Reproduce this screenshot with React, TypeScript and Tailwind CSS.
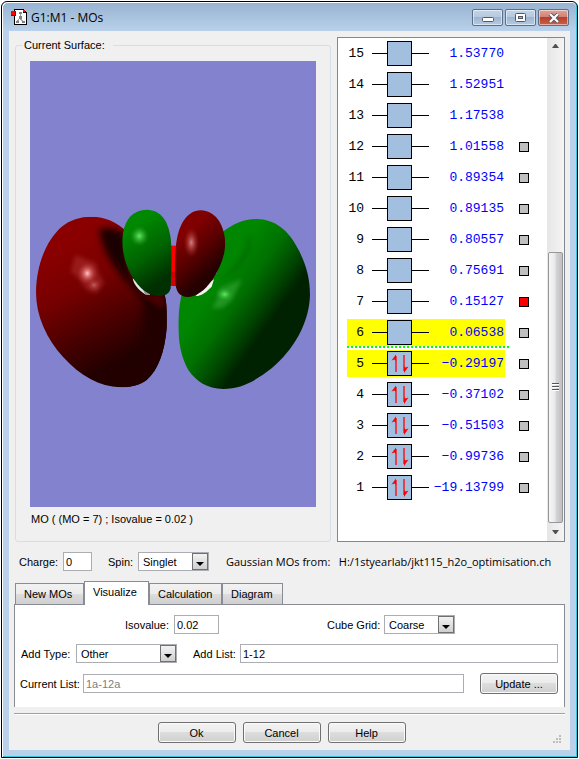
import React, { useState } from "react";

interface Orbital {
  id: number;
  energy: string;
  occupied: boolean;
  frontier: boolean;
  available: boolean;
}

const energies = [
  "1.53770",
  "1.52951",
  "1.17538",
  "1.01558",
  "0.89354",
  "0.89135",
  "0.80557",
  "0.75691",
  "0.15127",
  "0.06538",
  "-0.29197",
  "-0.37102",
  "-0.51503",
  "-0.99736",
  "-19.13799",
];

const orbitals: Orbital[] = energies.map((energy, i) => {
  const id = energies.length - i;
  return {
    id,
    energy: energy.replace("-", "−"),
    occupied: id <= 5,
    frontier: id === 5 || id === 6,
    available: id <= 12,
  };
});

const TitleIcon: React.FC = () => (
  <svg width="16" height="17" viewBox="0 0 16 17" shapeRendering="crispEdges">
    <path d="M3 0h10v1h1v1h1v1h1v13H3z" fill="#000" />
    <path d="M4 1h8v3h3v11H4z" fill="#fff" />
    <rect x="12" y="1" width="2" height="2" fill="#f00" />
    <path d="M9 4v5M9 9l-3 4M9 9l3 4" stroke="#a0a0a0" strokeWidth="1" />
    <path d="M8 3h3v2H8zM8 7h3v3H8zM5 12h3v2H5zM11 12h3v2h-3z" fill="#808080" />
    <rect x="0" y="2" width="5" height="5" fill="#900" />
    <rect x="0" y="2" width="4" height="4" fill="#f00" />
  </svg>
);

const Surface: React.FC = () => (
  <svg viewBox="0 0 286 446" className="w-full h-auto block bg-[#8282ce]" role="img" aria-label="MO 7">
    <defs>
      <linearGradient id="redLobe" gradientUnits="userSpaceOnUse" x1="120" y1="130" x2="300" y2="470">
        <stop offset="0" stopColor="#8a0000" />
        <stop offset="0.35" stopColor="#760000" />
        <stop offset="0.7" stopColor="#480000" />
        <stop offset="1" stopColor="#220000" />
      </linearGradient>
      <linearGradient id="greenLobe" gradientUnits="userSpaceOnUse" x1="570" y1="240" x2="730" y2="354">
        <stop offset="0" stopColor="#008600" />
        <stop offset="0.4" stopColor="#007000" />
        <stop offset="0.75" stopColor="#004600" />
        <stop offset="1" stopColor="#002200" />
      </linearGradient>
      <linearGradient id="greenSmall" gradientUnits="userSpaceOnUse" x1="310" y1="80" x2="410" y2="230">
        <stop offset="0" stopColor="#008800" />
        <stop offset="0.5" stopColor="#006600" />
        <stop offset="1" stopColor="#003000" />
      </linearGradient>
      <linearGradient id="redSmall" gradientUnits="userSpaceOnUse" x1="470" y1="100" x2="560" y2="200">
        <stop offset="0" stopColor="#800000" />
        <stop offset="0.5" stopColor="#580000" />
        <stop offset="1" stopColor="#250000" />
      </linearGradient>
      <radialGradient id="pinkGlow">
        <stop offset="0" stopColor="#ffc8c8" />
        <stop offset="0.35" stopColor="#e07070" stopOpacity="0.8" />
        <stop offset="1" stopColor="#a02020" stopOpacity="0" />
      </radialGradient>
      <radialGradient id="limeGlow">
        <stop offset="0" stopColor="#60e860" />
        <stop offset="0.4" stopColor="#38b838" stopOpacity="0.8" />
        <stop offset="1" stopColor="#108810" stopOpacity="0" />
      </radialGradient>
      <clipPath id="redClip">
        <path d="M185 50C225 50 260 66 290 95L340 220L404 285C411 310 411 350 410 385C404 455 385 510 350 540C330 555 305 562 270 562C210 560 150 528 100 472C50 415 18 350 18 275C20 190 50 120 95 80C120 60 150 50 185 50Z" />
      </clipPath>
      <clipPath id="greenClip">
        <path d="M580 94C610 72 640 57 680 57C735 58 775 90 803 145C828 190 840 235 840 285C838 370 790 450 725 505C680 540 635 567 580 567C530 565 500 545 475 510C452 470 445 425 445 370C446 330 450 310 454 288L500 260L560 220Z" />
      </clipPath>
      <filter id="blur6">
        <feGaussianBlur stdDeviation="6" />
      </filter>
      <filter id="blur10" x="-50%" y="-50%" width="200%" height="200%">
        <feGaussianBlur stdDeviation="10" />
      </filter>
      <filter id="blur14" x="-50%" y="-50%" width="200%" height="200%">
        <feGaussianBlur stdDeviation="14" />
      </filter>
    </defs>
    <g transform="translate(0 139) scale(0.33333)">
      <rect x="420" y="137" width="22" height="121" fill="#f00" />
      <path d="M420 215h22v43h-22z" fill="#a80000" opacity="0.5" />
      <g clipPath="url(#redClip)">
        <rect y="40" width="430" height="540" fill="url(#redLobe)" />
        <path d="M330 250C350 330 350 450 270 580H440V270Z" fill="#200000" filter="url(#blur14)" />
        <path d="M208 85C212 130 235 180 272 225C300 262 350 300 400 330L380 280L300 230L290 100L245 85Z" fill="#1e0000" filter="url(#blur10)" />
        <path d="M320 262C345 300 375 320 405 325L402 285L360 280Z" fill="#480000" filter="url(#blur6)" />
        <path d="M135 165L160 175L198 190L205 215L222 250L200 280L170 270L145 235L122 215Z" fill="#c04040" opacity="0.4" filter="url(#blur6)" />
        <ellipse cx="172" cy="220" rx="32" ry="36" fill="url(#pinkGlow)" />
        <ellipse cx="192" cy="255" rx="24" ry="22" fill="url(#pinkGlow)" opacity="0.4" />
      </g>
      <g clipPath="url(#greenClip)">
        <rect x="440" y="50" width="410" height="530" fill="url(#greenLobe)" />
        <path d="M650 110C650 150 620 200 560 245L600 225C650 190 668 150 664 105Z" fill="#006000" opacity="0.4" filter="url(#blur6)" />
        <path d="M636 236L606 300L575 325L545 325L560 300L570 265Z" fill="#38a838" opacity="0.6" filter="url(#blur6)" />
        <ellipse cx="584" cy="283" rx="30" ry="24" fill="url(#limeGlow)" />
      </g>
      <path d="M308 235L330 250L360 279V285L345 283C325 270 312 255 308 235Z" fill="#e8e8e8" />
      <path d="M335 262L360 279V285L345 283Z" fill="#999" />
      <path d="M552 238L545 260C530 275 515 288 497 288L515 265Z" fill="#f4f4f4" />
      <path
        d="M350 29C395 30 415 65 422 115C426 150 425 200 422 265C418 282 405 289 385 288C345 285 318 255 296 210C280 175 274 135 279 100C286 55 310 30 350 29Z"
        fill="url(#greenSmall)"
      />
      <ellipse cx="328" cy="108" rx="30" ry="32" fill="url(#limeGlow)" />
      <path
        d="M512 31C555 32 580 70 585 120C588 165 570 205 545 242C525 270 500 290 472 291C450 290 440 278 437 255C434 220 434 180 438 135C445 75 470 32 512 31Z"
        fill="url(#redSmall)"
      />
      <ellipse cx="484" cy="128" rx="24" ry="46" fill="url(#pinkGlow)" opacity="0.65" />
    </g>
  </svg>
);

const OrbitalRow: React.FC<{
  orbital: Orbital;
  selected: boolean;
  onSelect: () => void;
}> = ({ orbital, selected, onSelect }) => (
  <li className="h-[31px] pt-[2px]">
    <div className="flex items-center h-[27px]">
      <div
        className={`flex items-center h-full w-[158px] pr-px ${
          orbital.frontier ? "bg-[#ffff00]" : ""
        }`}
      >
        <span className="w-[17px] shrink-0 flex justify-end">{orbital.id}</span>
        <span className="w-[15px] ml-2 h-px bg-black shrink-0" />
        <span className="w-[25px] h-[25px] shrink-0 border border-black bg-[#a2bfdf]">
          {orbital.occupied && (
            <svg width="23" height="23" viewBox="0 0 23 23" fill="none" stroke="#f00">
              <path d="M8 20V4" strokeWidth="1.3" />
              <path d="M8 2.5V9L6.5 7.5L3.5 8.5Z" fill="#f00" stroke="none" />
              <path d="M16 3V19" strokeWidth="1.3" />
              <path d="M16 21V14L17.5 15.5L20.5 14.5Z" fill="#f00" stroke="none" />
            </svg>
          )}
        </span>
        <span className="w-[17px] h-px bg-black shrink-0" />
        <span className="grow flex justify-end text-[#0000ff]">{orbital.energy}</span>
      </div>
      {orbital.available && (
        <input
          type="checkbox"
          aria-label={`MO ${orbital.id}`}
          checked={selected}
          onChange={onSelect}
          className="appearance-none w-[10px] h-[10px] ml-[14px] border border-black bg-[#c0c0c0] checked:bg-[#ff0000]"
        />
      )}
    </div>
    {orbital.id === 6 && (
      <div className="w-[162px] h-[2px] bg-[repeating-linear-gradient(90deg,#00ff00_0_2px,#ffffff_2px_4px)]" />
    )}
  </li>
);

const Select: React.FC<{
  id: string;
  options: string[];
  className: string;
}> = ({ id, options, className }) => (
  <div className={`relative h-[19px] ${className}`}>
    <select
      id={id}
      className="appearance-none block w-full h-full border border-[#abadb3] bg-white pl-1 pr-4 outline-none leading-4"
    >
      {options.map((o) => (
        <option key={o}>{o}</option>
      ))}
    </select>
    <span className="absolute right-px top-px bottom-px w-4 border border-[#707070] bg-gradient-to-b from-[#f2f2f2] to-[#cfcfcf] flex items-center justify-center pointer-events-none">
      <svg width="8" height="4" viewBox="0 0 8 4" className="mt-1">
        <path d="M0 0h8L4 4z" fill="#000" />
      </svg>
    </span>
  </div>
);

const inputClass = "h-[19px] border border-[#abadb3] bg-white px-[2px] outline-none";
const buttonClass =
  "w-[78px] h-[21px] rounded-[3px] border border-[#707070] bg-[linear-gradient(#f3f3f3,#ebebeb_50%,#dddddd_50%,#cfcfcf)] shadow-[inset_0_0_0_1px_#fafafa] leading-4";
const captionClass =
  "w-[31px] h-[17px] rounded-[2px] border border-[#5c6f88] flex items-center justify-center shadow-[inset_0_0_0_1px_rgba(255,255,255,0.5)]";

const tabs = [
  { name: "New MOs", width: "w-[69px]" },
  { name: "Visualize", width: "w-[65px]" },
  { name: "Calculation", width: "w-[73px]" },
  { name: "Diagram", width: "w-[61px]" },
];

const App: React.FC = () => {
  const [selected, setSelected] = useState(7);
  const [tab, setTab] = useState("Visualize");

  return (
    <div className="w-full pt-px pl-px pr-px bg-white text-black text-[11px] leading-4 whitespace-nowrap font-['Liberation_Sans',sans-serif]">
      <div className="rounded-t-[6px] border border-black bg-[#b9d1ea] shadow-[inset_1px_1px_0_#fff,inset_-1px_-1px_0_#35c5dc] px-[7px] pb-[7px]">
        <header className="flex items-center h-[28px] -mx-[6px] mt-px pt-px pl-[8px] pr-[7px] bg-gradient-to-b from-[#98b4d2] to-[#b9d1ea] rounded-t-[5px]">
          <TitleIcon />
          <h1 className="ml-1 grow text-[12px] font-['Open_Sans',sans-serif]">G1:M1 - MOs</h1>
          <div className="flex gap-[2px]">
            <button
              aria-label="Minimize"
              className={`${captionClass} bg-[linear-gradient(#c3d4e7,#b4c8df_50%,#9db5d0_50%,#b5cbe4)]`}
            >
              <svg width="12" height="6" viewBox="0 0 12 6" className="mt-1">
                <rect x="0.5" y="0.5" width="11" height="4" rx="1" fill="#fff" stroke="#535666" />
              </svg>
            </button>
            <button
              aria-label="Maximize"
              className={`${captionClass} bg-[linear-gradient(#c3d4e7,#b4c8df_50%,#9db5d0_50%,#b5cbe4)]`}
            >
              <svg width="12" height="10" viewBox="0 0 12 10">
                <rect x="0.5" y="0.5" width="10" height="8" rx="1" fill="#fff" stroke="#535666" />
                <rect x="3.5" y="3.5" width="4" height="2" fill="#9db5d0" stroke="#535666" />
              </svg>
            </button>
            <button
              aria-label="Close"
              className={`${captionClass} border-[#5b2020] bg-[linear-gradient(#e0a398,#cf8070_50%,#b8412b_50%,#c9604a)]`}
            >
              <svg width="12" height="10" viewBox="0 0 12 10">
                <path d="M2 1L10 9M10 1L2 9" stroke="#535666" strokeWidth="4" />
                <path d="M2 1L10 9M10 1L2 9" stroke="#fff" strokeWidth="2.2" />
              </svg>
            </button>
          </div>
        </header>

        <main className="bg-[#f0f0f0] pt-[6px] pl-[5px] pr-[5px] pb-[7px]">
          <div className="flex gap-[6px] items-stretch">
            <fieldset className="grow min-w-0 ml-px border border-[#d5dfe5] rounded-[3px] px-[14px] pb-[12px]">
              <legend className="-ml-2 pl-[2px] pr-2">Current Surface:</legend>
              <div className="pt-[8px]">
                <Surface />
              </div>
              <p className="pl-px pt-1">MO ( (MO = 7) ; Isovalue = 0.02 )</p>
            </fieldset>

            <div className="w-[228px] shrink-0 flex border border-[#828790] bg-white">
              <ul className="grow pl-[9px] pb-[38px] text-[13px] font-['Liberation_Mono',monospace]">
                {orbitals.map((o) => (
                  <OrbitalRow
                    key={o.id}
                    orbital={o}
                    selected={selected === o.id}
                    onSelect={() => setSelected(o.id)}
                  />
                ))}
              </ul>
              <div className="w-[17px] shrink-0 flex flex-col items-center bg-gradient-to-r from-[#e6e6e6] to-[#f4f4f4]">
                <div className="h-4 flex items-center">
                  <svg width="7" height="4" viewBox="0 0 7 4">
                    <path d="M0 4h7L4 0H3z" fill="#505050" />
                  </svg>
                </div>
                <div className="grow-[200]" />
                <div className="grow-[264] w-[15px] rounded-[2px] border border-[#979797] bg-[linear-gradient(90deg,#f6f6f6,#e9e9eb_48%,#d5d5d9_52%,#c0c0c4)] flex flex-col items-center justify-center gap-px">
                  <span className="w-[7px] h-[2px] border-t border-[#555] bg-white" />
                  <span className="w-[7px] h-[2px] border-t border-[#555] bg-white" />
                  <span className="w-[7px] h-[2px] border-t border-[#555] bg-white" />
                </div>
                <div className="h-[18px] flex items-center">
                  <svg width="7" height="4" viewBox="0 0 7 4">
                    <path d="M0 0h7L4 4H3z" fill="#505050" />
                  </svg>
                </div>
              </div>
            </div>
          </div>

          <div className="flex items-center mt-[10px] pl-[5px] pr-[7px]">
            <label htmlFor="charge" className="w-[44px] shrink-0">Charge:</label>
            <input id="charge" defaultValue="0" className={`${inputClass} w-[29px] shrink-0`} />
            <label htmlFor="spin" className="ml-4 w-[30px] shrink-0">Spin:</label>
            <Select id="spin" options={["Singlet", "Triplet"]} className="w-[71px] shrink-0" />
            <p className="ml-[17px] grow min-w-0 whitespace-pre font-['Open_Sans',sans-serif]">
              Gaussian MOs from:{"   "}H:/1styearlab/jkt115_h2o_optimisation.ch
            </p>
          </div>

          <div role="tablist" className="flex items-end mt-[10px] pl-px">
            {tabs.map((item) => (
              <button
                key={item.name}
                role="tab"
                aria-selected={tab === item.name}
                onClick={() => setTab(item.name)}
                className={`${item.width} border border-b-0 border-[#898c95] text-left pl-2 ${
                  tab === item.name
                    ? "relative -mb-px h-[24px] bg-white pb-1"
                    : "h-[21px] bg-[linear-gradient(#f2f2f2,#ebebeb_50%,#dddddd_50%,#cfcfcf)]"
                }`}
              >
                {item.name}
              </button>
            ))}
          </div>

          <div role="tabpanel" className="border border-b-0 border-[#898c95] bg-white pt-[10px] pb-[13px] pl-[5px] pr-[6px]">
            <div className="flex items-center pl-[105px]">
              <label htmlFor="isovalue" className="w-[49px]">Isovalue:</label>
              <input id="isovalue" defaultValue="0.02" className={`${inputClass} w-[45px]`} />
              <label htmlFor="grid" className="ml-[108px] w-[57px]">Cube Grid:</label>
              <Select id="grid" options={["Coarse", "Medium", "Fine"]} className="w-[71px]" />
            </div>
            <div className="flex items-center mt-[10px]">
              <label htmlFor="addType" className="w-[56px] shrink-0 pl-px">Add Type:</label>
              <Select id="addType" options={["Other", "All", "Valence"]} className="w-[101px] shrink-0" />
              <label htmlFor="addList" className="ml-4 w-[47px] shrink-0">Add List:</label>
              <input id="addList" defaultValue="1-12" className={`${inputClass} grow min-w-0`} />
            </div>
            <div className="flex items-center mt-[10px]">
              <label htmlFor="currentList" className="w-[63px] shrink-0">Current List:</label>
              <input
                id="currentList"
                readOnly
                value="1a-12a"
                className={`${inputClass} grow min-w-0 text-[#808080]`}
              />
              <button className={`${buttonClass} ml-4 shrink-0`}>Update ...</button>
            </div>
          </div>

          <div className="mt-[6px] border-t border-[#a0a0a0] shadow-[inset_0_1px_0_#fff] pt-2 flex justify-center relative pr-4">
            <div className="flex gap-[7px]">
              <button className={buttonClass}>Ok</button>
              <button className={buttonClass}>Cancel</button>
              <button className={buttonClass}>Help</button>
            </div>
            <svg width="8" height="8" viewBox="0 0 8 8" className="absolute right-1 bottom-0" shapeRendering="crispEdges">
              <path d="M6 0h2v2H6zM6 3h2v2H6zM3 3h2v2H3zM6 6h2v2H6zM3 6h2v2H3zM0 6h2v2H0z" fill="#bdbdbd" />
            </svg>
          </div>
        </main>
      </div>
    </div>
  );
};

export default App;
